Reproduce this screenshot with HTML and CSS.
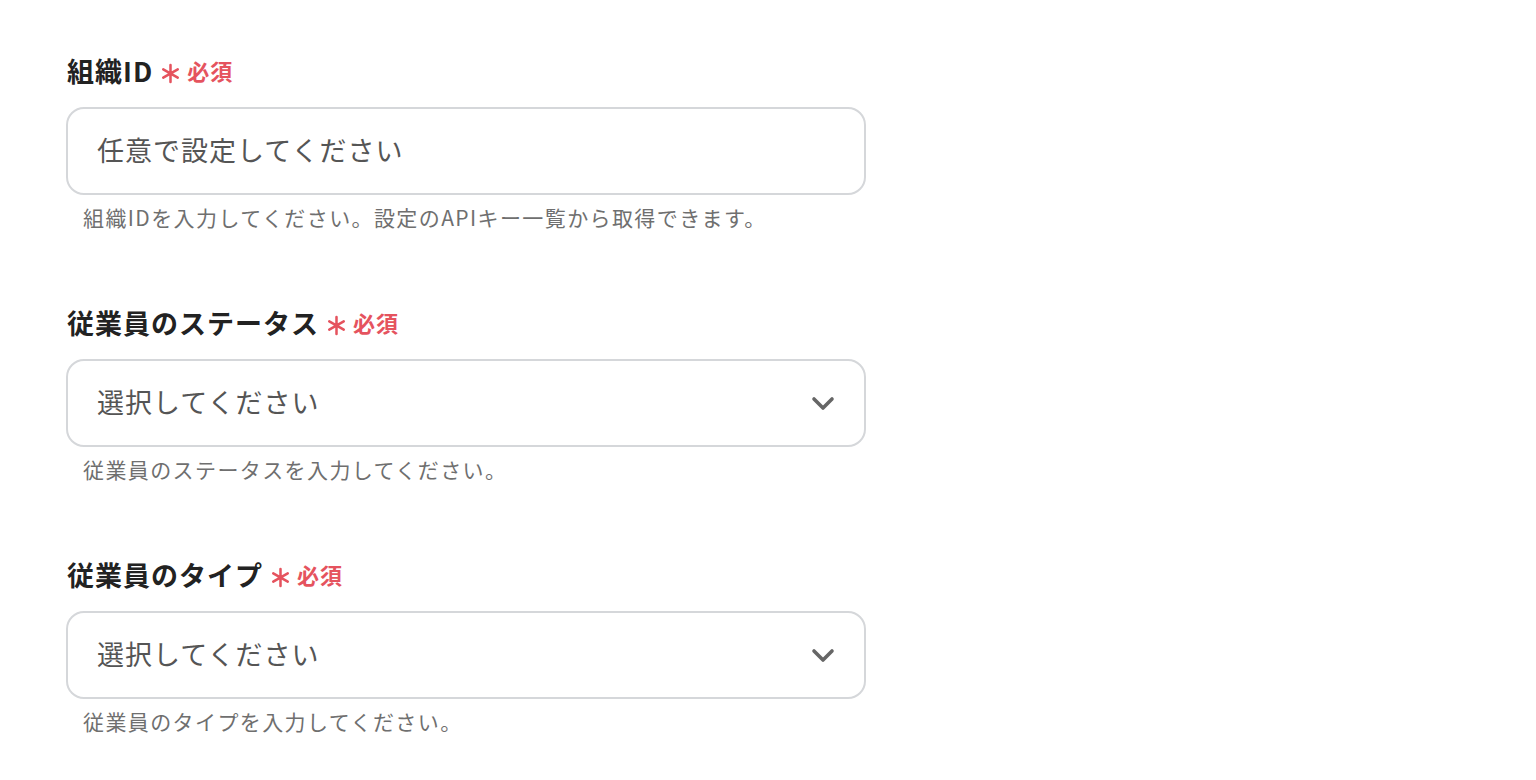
FILE: index.html
```html
<!DOCTYPE html>
<html lang="ja">

<head>
  <meta charset="UTF-8">
  <meta name="viewport" content="width=device-width, initial-scale=1.0">
  <title>設定</title>
  <link rel="stylesheet" href="styles.css">
</head>

<body>
  <div class="form">
    <div class="field">
      <label class="field-label">
        組織ID
        <span class="required">
          <svg class="asterisk" viewBox="0 0 20 20"><path d="M10 2v16M3.1 6l13.8 8M3.1 14l13.8-8" /></svg>
          必須
        </span>
      </label>
      <div class="input-box">
        <span class="placeholder">任意で設定してください</span>
      </div>
      <p class="help">組織IDを入力してください。設定のAPIキー一覧から取得できます。</p>
    </div>

    <div class="field">
      <label class="field-label">
        従業員のステータス
        <span class="required">
          <svg class="asterisk" viewBox="0 0 20 20"><path d="M10 2v16M3.1 6l13.8 8M3.1 14l13.8-8" /></svg>
          必須
        </span>
      </label>
      <div class="input-box select">
        <span class="placeholder">選択してください</span>
        <svg class="chevron" viewBox="0 0 24 16"><path d="M3 3l9 9 9-9" /></svg>
      </div>
      <p class="help">従業員のステータスを入力してください。</p>
    </div>

    <div class="field">
      <label class="field-label">
        従業員のタイプ
        <span class="required">
          <svg class="asterisk" viewBox="0 0 20 20"><path d="M10 2v16M3.1 6l13.8 8M3.1 14l13.8-8" /></svg>
          必須
        </span>
      </label>
      <div class="input-box select">
        <span class="placeholder">選択してください</span>
        <svg class="chevron" viewBox="0 0 24 16"><path d="M3 3l9 9 9-9" /></svg>
      </div>
      <p class="help">従業員のタイプを入力してください。</p>
    </div>
  </div>
</body>

</html>
```

FILE: styles.css
```css
body {
  font-family: "Noto Sans CJK JP", "Noto Sans", sans-serif;
  margin: 0;
  padding: 0;
  background: #fff;
  color: #222;
}

.form {
  padding: 52px 0 0 66px;
  display: flex;
  flex-direction: column;
  gap: 72px;
}

.field {
  width: 800px;
}

.field-label {
  display: flex;
  align-items: center;
  height: 36px;
  font-size: 27px;
  font-weight: 700;
  letter-spacing: 1px;
  margin-bottom: 19px;
  padding-left: 1px;
}

.required {
  display: flex;
  align-items: center;
  color: #e5535e;
  font-size: 22px;
  font-weight: 700;
  letter-spacing: 1px;
  margin-left: 7px;
  gap: 6px;
}

.asterisk {
  width: 21px;
  height: 21px;
  margin-top: 7px;
  fill: none;
  stroke: #e5535e;
  stroke-width: 2.4;
  stroke-linecap: round;
}

.input-box {
  box-sizing: border-box;
  height: 88px;
  border: 2px solid #d5d7da;
  border-radius: 18px;
  padding: 0 29px 0 29px;
  display: flex;
  align-items: center;
  justify-content: space-between;
}

.placeholder {
  font-size: 27px;
  letter-spacing: 1px;
  color: #555;
  margin-bottom: 4px;
}

.chevron {
  width: 24px;
  height: 16px;
  margin-top: 2px;
  fill: none;
  stroke: #666;
  stroke-width: 3.6;
  stroke-linecap: round;
  stroke-linejoin: round;
}

.help {
  margin: 7px 0 0 17px;
  font-size: 21px;
  line-height: 30px;
  letter-spacing: 1.4px;
  color: #6f6f6f;
}
```
